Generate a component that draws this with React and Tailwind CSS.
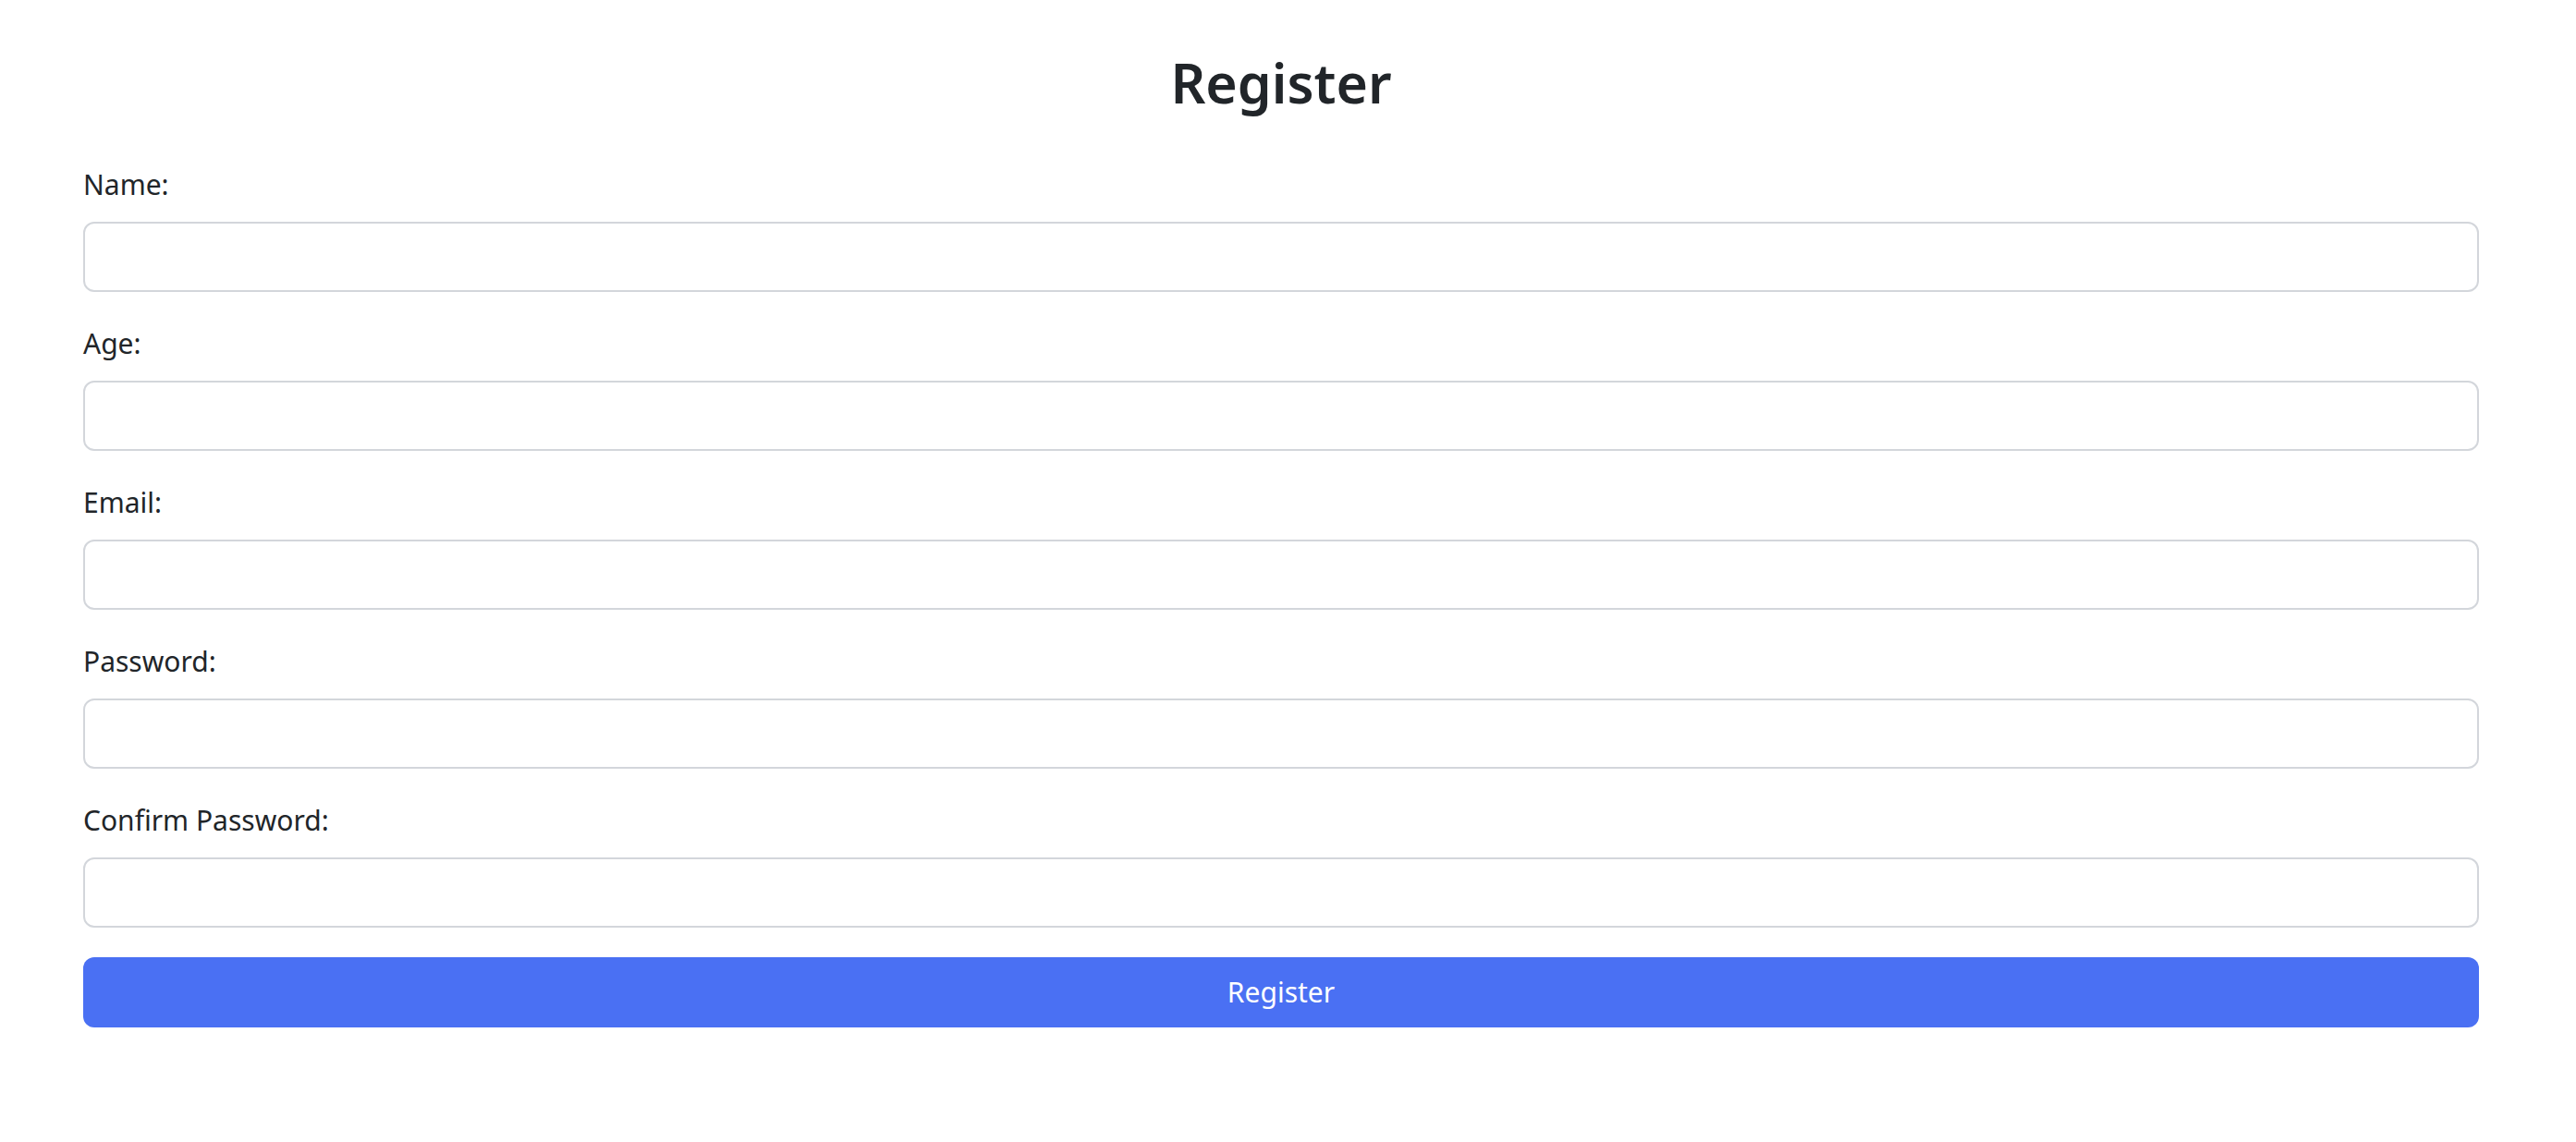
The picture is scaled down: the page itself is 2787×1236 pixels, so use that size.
export default function App() {
  const fields = [
    { label: "Name:", type: "text" },
    { label: "Age:", type: "number" },
    { label: "Email:", type: "email" },
    { label: "Password:", type: "password" },
    { label: "Confirm Password:", type: "password" },
  ];
  return (
    <div
      className="min-h-screen w-full bg-white text-[#212529]"
      style={{ fontFamily: '"Noto Sans", "Open Sans", sans-serif' }}
    >
      <div className="pl-[90px] pr-[105px] pt-[51px]">
        <h2 className="mb-[48px] text-center text-[59px] font-semibold leading-[77px] text-[#212529]">
          Register
        </h2>
        <form onSubmit={(e) => e.preventDefault()}>
          {fields.map((f) => (
            <div key={f.label} className="mb-[32px]">
              <label className="mb-[16px] block text-[30px] leading-[48px] text-[#212529]">
                {f.label}
              </label>
              <input
                type={f.type}
                className="block h-[76px] w-full rounded-[12px] border-2 border-[#d3d6db] bg-white px-[24px] text-[30px] outline-none"
              />
            </div>
          ))}
          <button
            type="submit"
            className="block h-[76px] w-full rounded-[12px] bg-[#4a70f3] text-[30px] leading-[48px] text-white"
          >
            Register
          </button>
        </form>
      </div>
    </div>
  );
}
